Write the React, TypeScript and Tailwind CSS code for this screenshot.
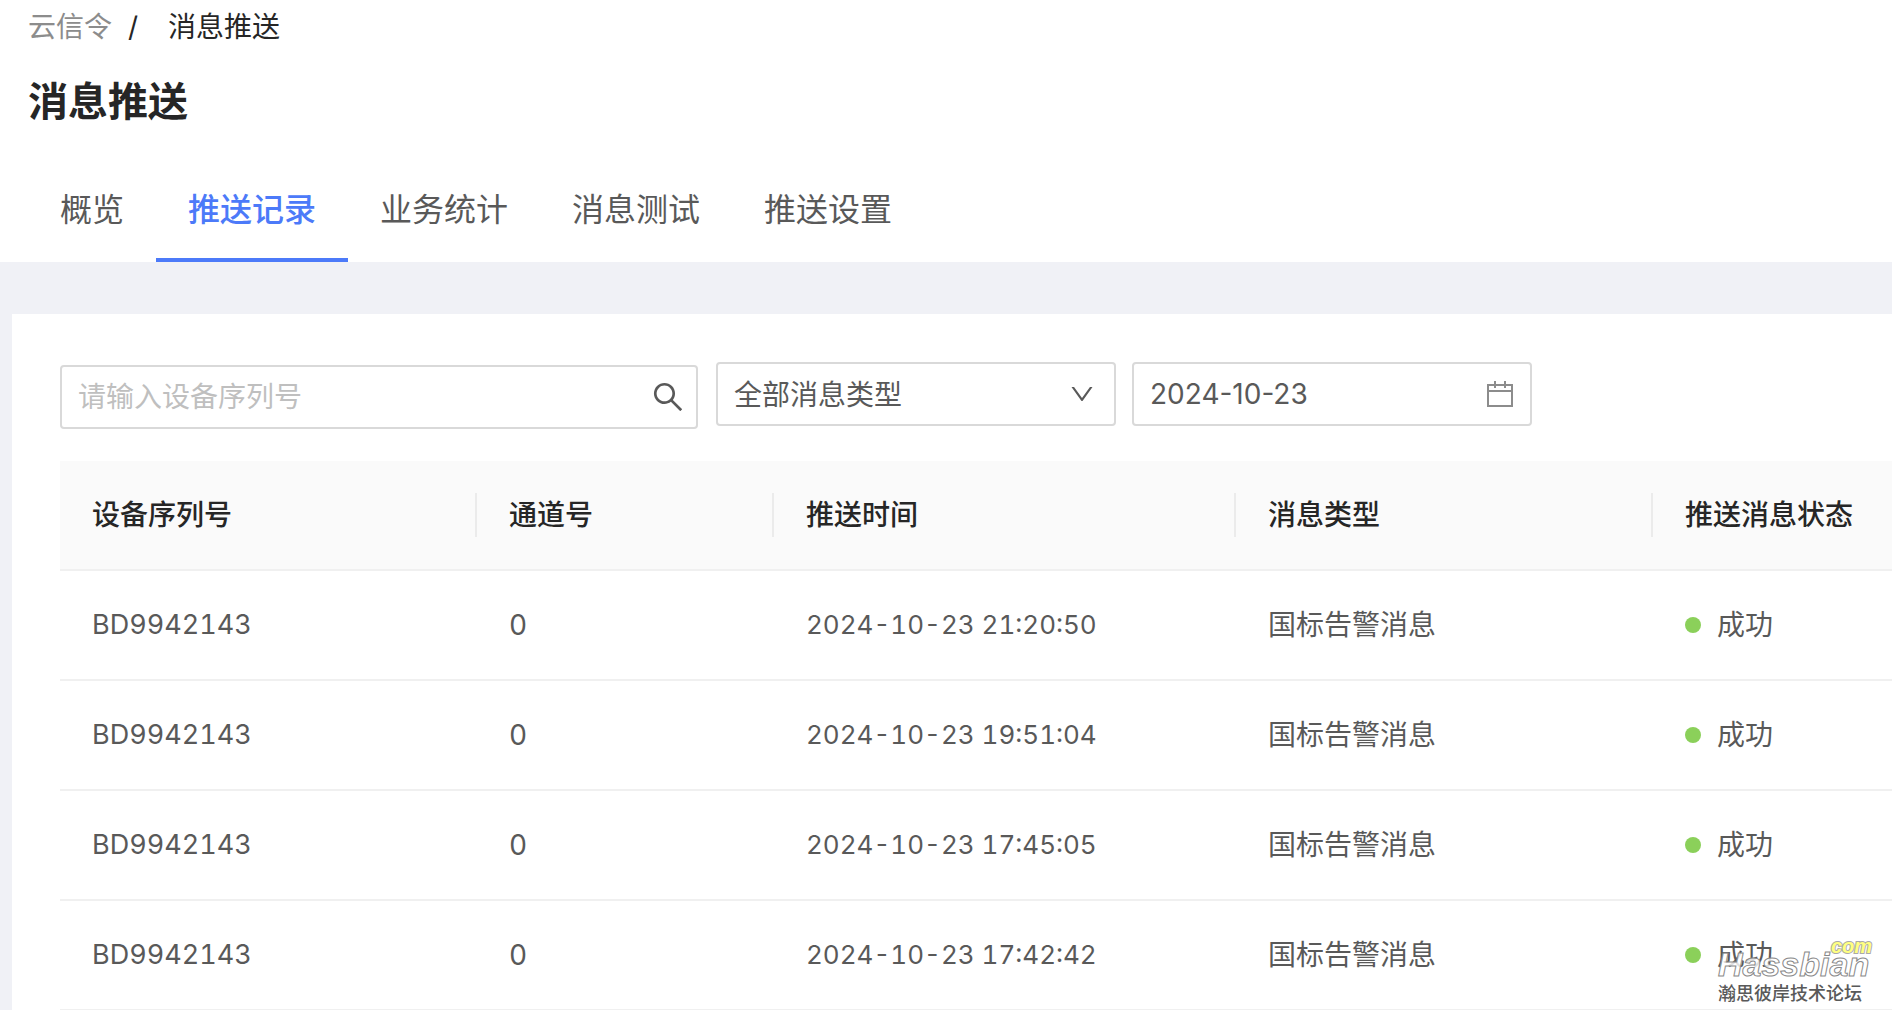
import { useState } from 'react'
import { AiOutlineDown, AiOutlineSearch } from 'react-icons/ai'
import clsx from 'clsx'

const TABS = ['概览', '推送记录', '业务统计', '消息测试', '推送设置']

const MESSAGE_TYPES = ['全部消息类型', '国标告警消息']

const COLUMNS = [
  { title: '设备序列号', width: 'w-[417px]' },
  { title: '通道号', width: 'w-[297px]' },
  { title: '推送时间', width: 'w-[462px]' },
  { title: '消息类型', width: 'w-[417px]' },
  { title: '推送消息状态', width: '' },
]

interface PushRecord {
  serial: string
  channel: number
  time: string
  type: string
  status: string
}

const RECORDS: PushRecord[] = [
  { serial: 'BD9942143', channel: 0, time: '2024-10-23 21:20:50', type: '国标告警消息', status: '成功' },
  { serial: 'BD9942143', channel: 0, time: '2024-10-23 19:51:04', type: '国标告警消息', status: '成功' },
  { serial: 'BD9942143', channel: 0, time: '2024-10-23 17:45:05', type: '国标告警消息', status: '成功' },
  { serial: 'BD9942143', channel: 0, time: '2024-10-23 17:42:42', type: '国标告警消息', status: '成功' },
]

function CalendarIcon({ className }: { className?: string }) {
  return (
    <svg viewBox="0 0 26 26" fill="none" stroke="currentColor" strokeWidth="2" className={className}>
      <path d="M1 4h24v21H1zM1 10h24M8 0v7M18 0v7" />
    </svg>
  )
}

function PageHeader() {
  const [active, setActive] = useState('推送记录')

  return (
    <header className="bg-white px-7 pt-[5px]">
      <nav aria-label="面包屑" className="flex h-11 items-center text-[#262626]">
        <a href="#" className="text-[#8c8c8c]">云信令</a>
        <span className="w-14 pl-4">/</span>
        <span>消息推送</span>
      </nav>
      <h1 className="mt-[25px] text-[40px] leading-14 font-bold text-[#262626]">消息推送</h1>
      <div role="tablist" className="mt-8 flex">
        {TABS.map((tab) => (
          <button
            key={tab}
            role="tab"
            aria-selected={tab === active}
            onClick={() => setActive(tab)}
            className={clsx(
              'h-[100px] border-b-4 px-8 text-[32px]',
              tab === active
                ? 'border-[#4c7af9] font-medium text-[#4c7af9]'
                : 'border-transparent text-[#595959]',
            )}
          >
            {tab}
          </button>
        ))}
      </div>
    </header>
  )
}

function Filters() {
  const [serial, setSerial] = useState('')
  const [type, setType] = useState(MESSAGE_TYPES[0])
  const [date, setDate] = useState('2024-10-23')

  return (
    <form className="flex items-start gap-4" onSubmit={(e) => e.preventDefault()}>
      <div className="mt-[3px] mr-[2px] flex h-16 w-[638px] items-center rounded border-2 border-[#d9d9d9] pr-2.5">
        <input
          type="text"
          aria-label="设备序列号"
          placeholder="请输入设备序列号"
          value={serial}
          onChange={(e) => setSerial(e.target.value)}
          className="h-full min-w-0 flex-1 px-4 outline-none placeholder:text-[#bfbfbf]"
        />
        <button type="submit" aria-label="搜索">
          <AiOutlineSearch className="h-9 w-9" />
        </button>
      </div>
      <div className="relative h-16 w-[400px]">
        <select
          aria-label="消息类型"
          value={type}
          onChange={(e) => setType(e.target.value)}
          className="h-full w-full appearance-none rounded border-2 border-[#d9d9d9] bg-white px-4 pt-0.5 outline-none"
        >
          {MESSAGE_TYPES.map((t) => <option key={t}>{t}</option>)}
        </select>
        <AiOutlineDown className="pointer-events-none absolute top-[18px] right-5 h-7 w-7" />
      </div>
      <div className="flex h-16 w-[400px] items-center rounded border-2 border-[#d9d9d9] pr-[17px]">
        <input
          type="text"
          aria-label="日期"
          value={date}
          onChange={(e) => setDate(e.target.value)}
          className="h-full min-w-0 flex-1 px-4 outline-none"
        />
        <CalendarIcon className="h-[26px] w-[26px] text-[#8c8c8c]" />
      </div>
    </form>
  )
}

function RecordTable() {
  return (
    <table className="mt-8 w-full table-fixed border-separate border-spacing-0 text-left tabular-nums">
      <thead>
        <tr className="h-[110px] bg-[#fafafa] text-[#262626]">
          {COLUMNS.map(({ title, width }, i) => (
            <th
              key={title}
              className={clsx('border-b-2 border-[#f0f0f0] p-0 font-medium whitespace-nowrap', width)}
            >
              <div
                className={clsx(
                  'flex h-11 items-center pl-8',
                  i < COLUMNS.length - 1 && 'border-r-2 border-[#ebebeb]',
                )}
              >
                {title}
              </div>
            </th>
          ))}
        </tr>
      </thead>
      <tbody>
        {RECORDS.map((r) => (
          <tr key={r.time} className="h-[110px] *:border-b-2 *:border-[#f0f0f0] *:pl-8">
            <td className="text-[27px]">{r.serial}</td>
            <td>{r.channel}</td>
            <td className="text-[26px]">{r.time}</td>
            <td>{r.type}</td>
            <td>
              <span className="flex items-center gap-4">
                <span className="h-4 w-4 rounded-full bg-[#8bd05a]" />
                {r.status}
              </span>
            </td>
          </tr>
        ))}
      </tbody>
    </table>
  )
}

function Watermark() {
  return (
    <div className="pointer-events-none absolute right-5 bottom-1.5 flex w-[154px] flex-col font-['Liberation_Sans','Noto_Sans_CJK_SC',sans-serif]">
      <span className="self-end text-[20px] leading-3 font-bold text-[#ffff80] italic [paint-order:stroke] [-webkit-text-stroke:2px_#aaa]">
        com
      </span>
      <span className="text-[34px] leading-6 font-bold text-white/80 italic [-webkit-text-stroke:1px_#888]">
        Hassbian
      </span>
      <span className="mt-2 text-[18px] leading-5 font-medium whitespace-nowrap text-[#595959]">
        瀚思彼岸技术论坛
      </span>
    </div>
  )
}

export default function App() {
  return (
    <div className="relative flex h-screen flex-col overflow-hidden bg-[#f0f1f6] font-['Inter','Noto_Sans_CJK_SC',sans-serif] text-[28px] leading-11 text-[#595959]">
      <PageHeader />
      <main className="mt-[52px] ml-3 shrink-0 bg-white pt-12 pl-12">
        <Filters />
        <RecordTable />
      </main>
      <Watermark />
    </div>
  )
}
